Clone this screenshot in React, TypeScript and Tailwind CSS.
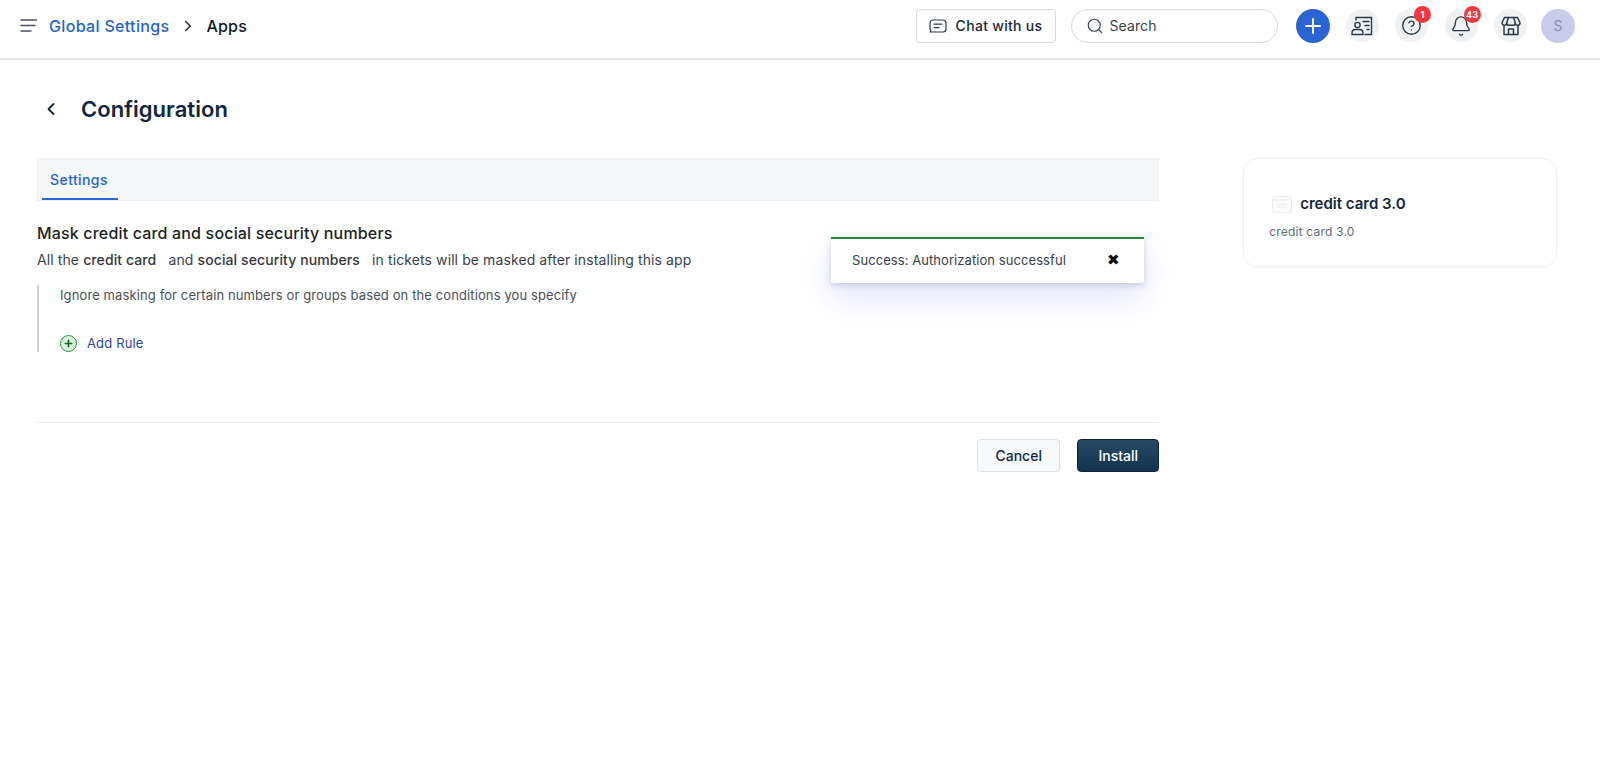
import { Bell, ChevronLeft, ChevronRight, CircleHelp, Plus, Search } from "lucide-react";

const IconCircle = ({ children, badge }: { children: React.ReactNode; badge?: string }) => (
  <div className="relative w-[33px] h-[33px] rounded-full bg-[#f0f1f3] flex items-center justify-center text-[#2b3a4a]">
    {children}
    {badge && (
      <span className="absolute -top-[3px] -right-[3px] min-w-[17px] h-[17px] px-[2px] rounded-full bg-[#f0383f] text-white text-[9px] font-bold leading-[17px] text-center">
        {badge}
      </span>
    )}
  </div>
);

const Header = () => (
  <header className="h-[60px] border-b-2 border-[#e6e9ed] flex items-center justify-between pl-[20px] pr-[25px] pb-[7px]">
    <div className="flex items-center">
      <svg width="17" height="13" viewBox="0 0 17 13" fill="none" stroke="#4a5561" strokeWidth="1.4" strokeLinecap="round">
        <path d="M1 1h15.5M1 6.5h14M1 12h10" />
      </svg>
      <span className="ml-[12px] text-[16px] tracking-[0.33px] font-medium text-[#2563d0]">Global Settings</span>
      <ChevronRight className="ml-[10px] text-[#1f2a37]" size={18} strokeWidth={2} />
      <span className="ml-[9px] text-[16px] tracking-[0.2px] font-medium text-[#111827]">Apps</span>
    </div>
    <div className="flex items-center">
      <button className="w-[140px] h-[34px] rounded-[4px] border border-[#d5dce3] flex items-center justify-center gap-[9px] text-[14px] tracking-[0.3px] font-medium text-[#1c2733]">
        <svg width="18" height="14" viewBox="0 0 18 14" fill="none" stroke="#2b3a4a" strokeWidth="1.2" strokeLinecap="round">
          <path d="M4 1h10a3 3 0 0 1 3 3v6a3 3 0 0 1-3 3H1.2l.6-1.6A3 3 0 0 1 1 9.5V4a3 3 0 0 1 3-3z" />
          <path d="M5 5.2h8M5 8.6h5" />
        </svg>
        Chat with us
      </button>
      <div className="ml-[15px] w-[207px] h-[34px] rounded-full border border-[#d5dce3] flex items-center pl-[14px] gap-[6px] text-[14px] tracking-[0.1px] text-[#39424e]">
        <Search size={18} strokeWidth={1.5} />
        Search
      </div>
      <div className="ml-[18px] w-[34px] h-[34px] rounded-full bg-[#2a64d3] flex items-center justify-center text-white">
        <Plus size={24} strokeWidth={2} />
      </div>
      <div className="ml-[16px] flex items-center gap-[16.5px]">
        <IconCircle>
          <svg width="22" height="20" viewBox="0 0 22 20" fill="none" stroke="#2b3a4a" strokeWidth="1.4" strokeLinecap="round">
            <path d="M5 4V1.5h15.5V18.5H14" />
            <path d="M12 5.5h6M14 9.5h4M16 13.5h2" />
            <circle cx="6.5" cy="9" r="2.6" />
            <path d="M1 18.5v-1.6c0-2 1.6-3.4 3.4-3.4h4.2c1.8 0 3.4 1.4 3.4 3.4v1.6z" />
          </svg>
        </IconCircle>
        <IconCircle badge="1">
          <CircleHelp size={21} strokeWidth={1.6} />
        </IconCircle>
        <IconCircle badge="43">
          <Bell size={22} strokeWidth={1.5} />
        </IconCircle>
        <IconCircle>
          <svg width="20" height="20" viewBox="0 0 20 20" fill="none" stroke="#2b3a4a" strokeWidth="1.5" strokeLinejoin="round">
            <path d="M3.500 1.500h13l2.500 5.200c0 1.600-1.100 2.600-2.400 2.600-1.200 0-2.200-.9-2.300-2.600 0 1.700-1.100 2.600-2.400 2.600H8.100c-1.300 0-2.400-.9-2.400-2.600-.1 1.700-1.100 2.600-2.300 2.600C2.100 9.300 1 8.300 1 6.700z" />
            <path d="M7.500 1.500 5.700 6.700M12.500 1.500l1.800 5.200" />
            <path d="M3 9.300v9.200h14V9.300" />
            <path d="M7.500 18.500V13h5v5.500" />
          </svg>
        </IconCircle>
      </div>
      <div className="ml-[14px] w-[34px] h-[34px] rounded-full bg-[#c8cce8] flex items-center justify-center text-[14px] text-[#8a8fb0]">
        S
      </div>
    </div>
  </header>
);

const CreditCardIcon = () => (
  <svg width="20" height="17" viewBox="0 0 20 17" fill="none" stroke="#e9ebee" strokeWidth="1">
    <rect x="0.5" y="0.5" width="19" height="16" rx="2" fill="#fbfbfc" />
    <path d="M1 4h18M5 8.500h10M5 11h10" />
  </svg>
);

const App = () => (
  <div className="min-h-[759px] bg-white font-['Inter',sans-serif]">
    <Header />
    <main className="relative flex items-start pl-[37px] pr-[43px]">
      <div className="w-[1123px]">
        <div className="h-[98px] flex items-center">
          <ChevronLeft className="ml-[4px] text-[#12263f]" size={20} strokeWidth={2.2} />
          <h1 className="ml-[20px] text-[22px] tracking-[0.05px] font-semibold text-[#12263f]">Configuration</h1>
        </div>
        <div className="h-[43px] bg-[#f5f6f8] border border-[#eef0f2] pl-[4px] flex items-end">
          <div className="w-[76px] h-[42px] border-b-2 border-[#2f66d6] flex items-center justify-center text-[14px] tracking-[0.4px] font-medium text-[#2563d0] pt-[2px] pr-[2px]">
            Settings
          </div>
        </div>
        <h2 className="mt-[20px] text-[16px] leading-[24px] tracking-[0.17px] font-medium text-[#1b1f24]">
          Mask credit card and social security numbers
        </h2>
        <p className="mt-[4px] text-[14px] leading-[22px] tracking-[0.1px] text-[#3a4048] whitespace-pre">
          All the <span className="font-medium text-[#32373d]">credit card</span>{"   "}and{" "}
          <span className="font-medium text-[#32373d]">social security numbers</span>{"   "}in tickets will be masked after installing this app
        </p>
        <div className="mt-[14px] h-[67px] border-l-2 border-[#cfd2d6] pl-[21px] flex flex-col">
          <p className="text-[13px] leading-[20px] tracking-[0.11px] text-[#4a5058]">
            Ignore masking for certain numbers or groups based on the conditions you specify
          </p>
          <div className="mt-[29px] flex items-center gap-[10px]">
            <div className="w-[17px] h-[17px] rounded-full border border-[#2f8f3a] bg-[#d9f0dc] flex items-center justify-center text-[#14691f]">
              <Plus size={11} strokeWidth={3.5} />
            </div>
            <span className="text-[13px] tracking-[0.15px] text-[#2f3f9e]">Add Rule</span>
          </div>
        </div>
        <div className="mt-[70px] pt-[16px] border-t border-[#e8eaed] flex justify-end gap-[17px]">
          <button className="w-[83px] h-[33px] rounded-[4px] border border-[#dfe3e8] bg-[#f7f9fa] text-[14px] font-medium text-[#12263f]">
            Cancel
          </button>
          <button className="w-[82px] h-[33px] rounded-[4px] border border-[#10253c] bg-gradient-to-b from-[#264966] to-[#12344d] text-[14px] font-medium text-white">
            Install
          </button>
        </div>
      </div>
      <aside className="ml-[84px] mt-[98px] w-[314px] h-[109px] rounded-[14px] border border-[#eef0f3] shadow-[0_1px_4px_rgba(18,38,63,0.03)] pl-[25px] pt-[34px]">
        <div className="flex items-center pl-[3px] gap-[8px]">
          <CreditCardIcon />
          <span className="text-[15px] font-semibold text-[#12263f]">credit card 3.0</span>
        </div>
        <p className="mt-[7px] text-[12px] tracking-[0.2px] text-[#5b6b7d]">credit card 3.0</p>
      </aside>
      <div className="absolute left-[831px] top-[177px] w-[313px] h-[46px] border-t-2 border-[#2b8a36] bg-white rounded-b-[2px] shadow-[0_2px_6px_rgba(60,70,130,0.22),0_14px_34px_rgba(70,80,220,0.16)] flex items-center pl-[21px] text-[13px] tracking-[0.07px] text-[#3a4048]">
        Success: Authorization successful
        <span className="absolute left-[276px] top-[11px] text-[15px] leading-[20px] text-black font-['DejaVu_Sans',sans-serif]">✖</span>
      </div>
    </main>
  </div>
);

export default App;
